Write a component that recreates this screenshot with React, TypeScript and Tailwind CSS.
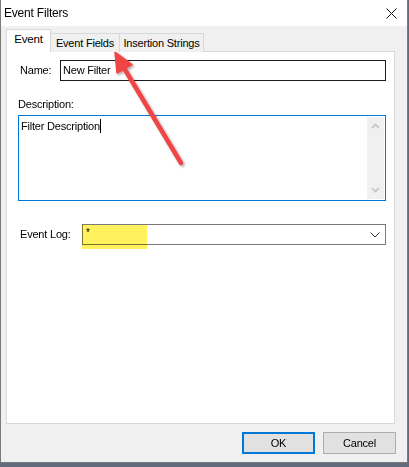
import React from "react";

const font = "font-['Liberation_Sans',Arial,sans-serif] text-[11px] tracking-[-0.2px]";

export default function App() {
  return (
    <div className={`w-[409px] h-[467px] bg-[#5f6b78] overflow-hidden ${font} text-black`}>
      <div className="w-[408px] h-[463px] border-l border-r border-b border-[#7a7a7a] flex flex-col relative">
        {/* Title bar */}
        <div className="h-[26px] bg-white flex items-center justify-between pl-[3px] pr-[10px] shrink-0">
          <span className="text-[12px] tracking-[-0.2px]">Event Filters</span>
          <svg width="11" height="11" viewBox="0 0 11 11">
            <path d="M0.5 0.5 L10.5 10.5 M10.5 0.5 L0.5 10.5" stroke="#111" strokeWidth="1" />
          </svg>
        </div>
        {/* Body */}
        <div className="flex-1 bg-[#f0f0f0] flex flex-col pl-[5px] pr-[12px] pt-[3px]">
          {/* Tabs */}
          <div className="flex items-end h-[23px] relative z-10 -mb-px">
            <div className="h-[23px] w-[45px] bg-white border border-b-0 border-[#d9d9d9] flex items-center justify-center pb-[2px] text-[11.5px]">
              Event
            </div>
            <div className="h-[19px] w-[69px] bg-[#f0f0f0] border border-l-0 border-b-0 border-[#d9d9d9] flex items-center justify-center">
              Event Fields
            </div>
            <div className="h-[19px] w-[84px] bg-[#f0f0f0] border border-l-0 border-b-0 border-[#d9d9d9] flex items-center justify-center">
              Insertion Strings
            </div>
          </div>
          {/* Panel */}
          <div className="h-[373px] bg-white border border-[#d9d9d9] flex flex-col pl-[11px] pr-[8px] pt-[8px]">
            <div className="flex items-center h-[21px]">
              <span className="w-[42px] pl-[2px]">Name:</span>
              <div className="flex-1 h-[21px] border border-[#1a1a1a] flex items-center pl-[2px]">New Filter</div>
            </div>
            <div className="mt-[17px] h-[13px] flex items-center">Description:</div>
            <div className="mt-[4px] h-[86px] border border-[#0078d7] flex">
              <div className="flex-1 pl-[2px] pt-[2px] flex items-start">
                <span>Filter Description</span>
                <span className="w-px h-[14px] bg-black mt-[1px]" />
              </div>
              <div className="w-[17px] bg-[#f0f0f0] my-px mr-px flex flex-col items-center justify-between py-[6px]">
                <svg width="9" height="6" viewBox="0 0 9 6">
                  <path d="M1 5 L4.5 1.5 L8 5" stroke="#c2c2c2" strokeWidth="1.6" fill="none" />
                </svg>
                <svg width="9" height="6" viewBox="0 0 9 6">
                  <path d="M1 1 L4.5 4.5 L8 1" stroke="#c2c2c2" strokeWidth="1.6" fill="none" />
                </svg>
              </div>
            </div>
            <div className="mt-[23px] flex items-center h-[21px] relative">
              <span className="w-[64px] pl-[2px]">Event Log:</span>
              <div className="flex-1 h-[21px] border border-[#7a7a7a] flex items-center justify-between pl-[3px] pr-[5px] relative">
                <span className="relative z-10 text-[10px] -mt-[4px]">*</span>
                <svg width="10" height="6" viewBox="0 0 10 6">
                  <path d="M0.5 0.5 L5 5 L9.5 0.5" stroke="#333" strokeWidth="1" fill="none" />
                </svg>
              </div>
              <div className="absolute left-[64px] top-[1px] w-[65px] h-[24px] bg-[#fff25c] mix-blend-multiply" />
            </div>
          </div>
          {/* Buttons */}
          <div className="flex justify-end gap-[8px] mt-[8px] -mr-[1px]">
            <button className="w-[73px] h-[22px] bg-[#e1e1e1] border-2 border-[#0078d7] flex items-center justify-center">OK</button>
            <button className="w-[73px] h-[22px] bg-[#e1e1e1] border border-[#adadad] flex items-center justify-center">Cancel</button>
          </div>
        </div>
        {/* Red annotation arrow */}
        <svg className="absolute left-0 top-0 pointer-events-none" width="409" height="467">
          <defs>
            <filter id="sh" x="-20%" y="-20%" width="140%" height="140%">
              <feDropShadow dx="1.5" dy="1.5" stdDeviation="1.2" floodColor="#000" floodOpacity="0.35" />
            </filter>
          </defs>
          <g filter="url(#sh)">
            <line x1="180" y1="163" x2="123" y2="68" stroke="#f04545" strokeWidth="4.5" strokeLinecap="round" />
            <polygon points="114,52 131,64.5 116,73" fill="#f04545" stroke="#f04545" strokeWidth="1.5" strokeLinejoin="round" />
          </g>
        </svg>
      </div>
    </div>
  );
}
